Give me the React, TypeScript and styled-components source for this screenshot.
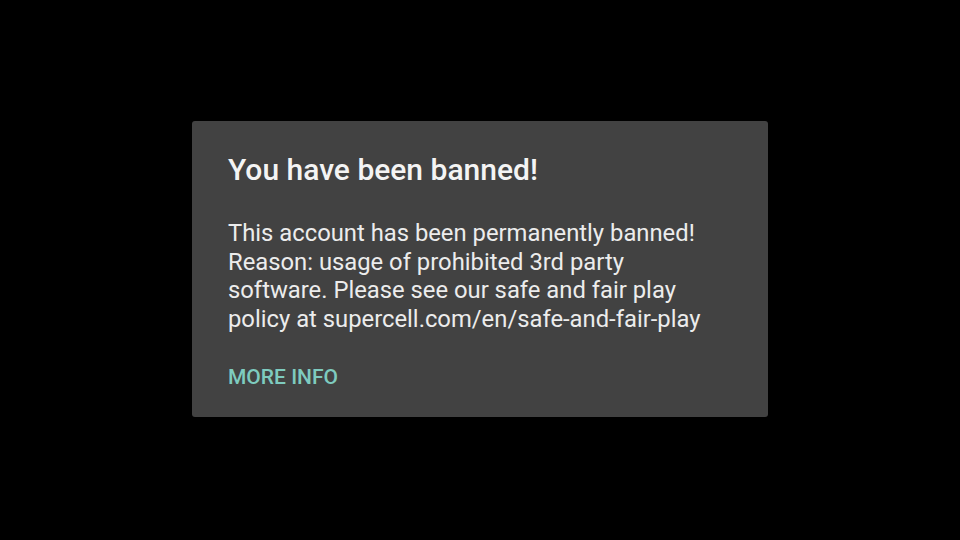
import React from "react";
import styled, { createGlobalStyle } from "styled-components";

const Global = createGlobalStyle`
  html, body { margin: 0; padding: 0; background: #000; }
  body { font-family: Roboto, "Noto Sans", sans-serif; }
`;

const Screen = styled.div`
  width: 960px;
  height: 540px;
  background: #000;
  display: flex;
  align-items: center;
  justify-content: center;
`;

const Dialog = styled.div`
  width: 576px;
  height: 296px;
  box-sizing: border-box;
  margin-top: -2px;
  background: #424242;
  border-radius: 3px;
  padding: 31px 36px 0 36px;
  display: flex;
  flex-direction: column;
`;

const Title = styled.h1`
  margin: 0;
  font-family: Roboto, sans-serif;
  font-weight: 500;
  font-size: 30px;
  line-height: 36px;
  color: #f4f4f4;
`;

const Body = styled.p`
  margin: 31px 0 0 0;
  font-family: Roboto, sans-serif;
  font-weight: 400;
  font-size: 23.8px;
  line-height: 28.7px;
  color: #ececec;
`;

const Action = styled.button`
  align-self: flex-start;
  margin-top: 31px;
  padding: 0;
  border: none;
  background: none;
  font-family: Roboto, sans-serif;
  font-weight: 500;
  font-size: 21px;
  line-height: 24px;
  color: #7ecbbf;
  text-transform: uppercase;
`;

export default function App() {
  return (
    <>
      <Global />
      <Screen>
        <Dialog>
          <Title>You have been banned!</Title>
          <Body>
            This account has been permanently banned!
            <br />
            Reason: usage of prohibited 3rd party
            <br />
            software. Please see our safe and fair play
            <br />
            policy at supercell.com/en/safe-and-fair-play
          </Body>
          <Action>More info</Action>
        </Dialog>
      </Screen>
    </>
  );
}
